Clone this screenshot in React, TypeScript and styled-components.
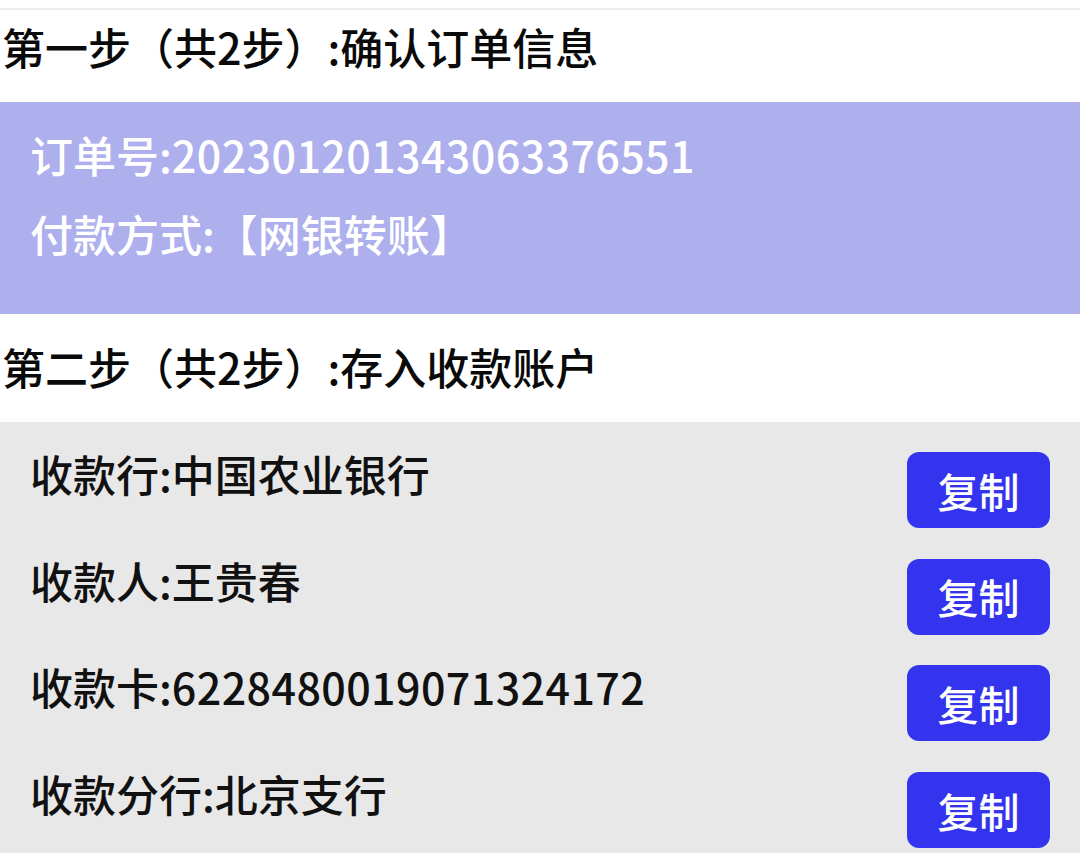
import React from "react";
import styled, { createGlobalStyle } from "styled-components";

const Global = createGlobalStyle`
  html, body { margin: 0; padding: 0; background: #ffffff; }
  body { font-family: "Noto Sans CJK SC", "Noto Sans", sans-serif; }
  * { box-sizing: border-box; }
`;

const Page = styled.div`
  width: 1080px;
  height: 853px;
  overflow: hidden;
  background: #ffffff;
  padding-top: 8px;
`;

const TopRule = styled.div`
  height: 2px;
  background: #ececec;
`;

const StepTitle = styled.div<{ $top: number; $height: number }>`
  height: ${(p) => p.$height}px;
  padding-top: ${(p) => p.$top}px;
  padding-left: 2px;
  font-size: 43px;
  font-weight: 500;
  line-height: 56px;
  color: #0a0a0a;
  white-space: nowrap;
`;

const OrderPanel = styled.div`
  height: 212px;
  background: #aeb0ee;
  padding: 13px 0 0 30px;
`;

const OrderLine = styled.div`
  font-size: 43px;
  font-weight: 500;
  line-height: 79px;
  color: #ffffff;
  white-space: nowrap;
`;

const Digits = styled.span`
  letter-spacing: 0.4px;
`;

const AccountPanel = styled.div`
  background: #e8e8e8;
  padding: 30px 30px 0 30px;
  display: flex;
  flex-direction: column;
  gap: 30.7px;
  height: 431px;
`;

const Row = styled.div`
  display: flex;
  align-items: flex-start;
  justify-content: space-between;
  height: 76px;
`;

const Label = styled.div`
  font-size: 43px;
  font-weight: 500;
  line-height: 42px;
  color: #111111;
  white-space: nowrap;
`;

const CopyButton = styled.button`
  width: 143px;
  height: 76px;
  border: none;
  border-radius: 12px;
  background: #3434ee;
  color: #ffffff;
  font-family: "Noto Sans CJK SC", sans-serif;
  font-size: 41px;
  font-weight: 500;
  line-height: 1;
  padding: 0;
  display: flex;
  align-items: center;
  justify-content: center;
  flex-shrink: 0;
`;

const rows: [string, string][] = [
  ["收款行:", "中国农业银行"],
  ["收款人:", "王贵春"],
  ["收款卡:", "6228480019071324172"],
  ["收款分行:", "北京支行"],
];

const isNum = (s: string) => /^\d+$/.test(s);

export default function App() {
  return (
    <Page>
      <Global />
      <TopRule />
      <StepTitle $top={8} $height={92}>第一步（共2步）:确认订单信息</StepTitle>
      <OrderPanel>
        <OrderLine>
          订单号:<Digits>202301201343063376551</Digits>
        </OrderLine>
        <OrderLine>付款方式:【网银转账】</OrderLine>
      </OrderPanel>
      <StepTitle $top={24} $height={108}>第二步（共2步）:存入收款账户</StepTitle>
      <AccountPanel>
        {rows.map(([k, v]) => (
          <Row key={k}>
            <Label>
              {k}
              {isNum(v) ? <Digits>{v}</Digits> : v}
            </Label>
            <CopyButton>复制</CopyButton>
          </Row>
        ))}
      </AccountPanel>
    </Page>
  );
}
